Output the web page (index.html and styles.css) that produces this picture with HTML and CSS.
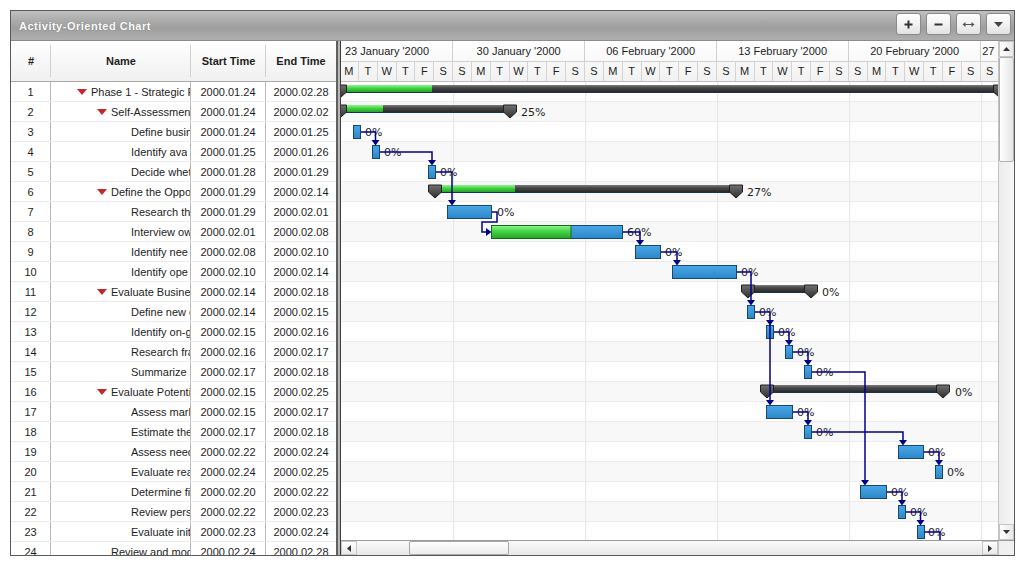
FILE: index.html
```html
<!DOCTYPE html>
<html>
<head>
<meta charset="utf-8">
<title>Activity-Oriented Chart</title>
<link rel="stylesheet" href="styles.css">
</head>
<body>
<div class="frame">
  <div class="titlebar">
    <span class="title">Activity-Oriented Chart</span>
    <div class="tools">
      <div class="tbtn"><svg width="11" height="11" viewBox="0 0 11 11"><path d="M5.5 1.5V9.5M1.5 5.5H9.5" stroke="#333" stroke-width="2"/></svg></div>
      <div class="tbtn"><svg width="11" height="11" viewBox="0 0 11 11"><path d="M1.5 5.5H9.5" stroke="#333" stroke-width="2"/></svg></div>
      <div class="tbtn"><svg width="13" height="9" viewBox="0 0 13 9"><path d="M3 4.5H10" stroke="#555" stroke-width="1"/><path d="M0.5 4.5L3.5 2V7Z M12.5 4.5L9.5 2V7Z" fill="#555"/></svg></div>
      <div class="tbtn"><svg width="9" height="5" viewBox="0 0 9 5"><path d="M0 0H9L4.5 5Z" fill="#444"/></svg></div>
    </div>
  </div>
  <div class="main">
    <div class="grid">
      <div class="ghead">
        <div class="c num">#</div>
        <div class="c name">Name</div>
        <div class="c start">Start Time</div>
        <div class="c end">End Time</div>
      </div>
      <div class="gbody">
        <div class="grow"><div class="c num">1</div><div class="c name l0"><i class="tri"></i><span class="nm">Phase 1 - Strategic P</span></div><div class="c start">2000.01.24</div><div class="c end">2000.02.28</div></div>
        <div class="grow"><div class="c num">2</div><div class="c name l1"><i class="tri"></i><span class="nm">Self-Assessment</span></div><div class="c start">2000.01.24</div><div class="c end">2000.02.02</div></div>
        <div class="grow"><div class="c num">3</div><div class="c name l2"><span class="nm">Define busin</span></div><div class="c start">2000.01.24</div><div class="c end">2000.01.25</div></div>
        <div class="grow"><div class="c num">4</div><div class="c name l2"><span class="nm">Identify ava</span></div><div class="c start">2000.01.25</div><div class="c end">2000.01.26</div></div>
        <div class="grow"><div class="c num">5</div><div class="c name l2"><span class="nm">Decide whet</span></div><div class="c start">2000.01.28</div><div class="c end">2000.01.29</div></div>
        <div class="grow"><div class="c num">6</div><div class="c name l1"><i class="tri"></i><span class="nm">Define the Oppo</span></div><div class="c start">2000.01.29</div><div class="c end">2000.02.14</div></div>
        <div class="grow"><div class="c num">7</div><div class="c name l2"><span class="nm">Research th</span></div><div class="c start">2000.01.29</div><div class="c end">2000.02.01</div></div>
        <div class="grow"><div class="c num">8</div><div class="c name l2"><span class="nm">Interview ow</span></div><div class="c start">2000.02.01</div><div class="c end">2000.02.08</div></div>
        <div class="grow"><div class="c num">9</div><div class="c name l2"><span class="nm">Identify nee</span></div><div class="c start">2000.02.08</div><div class="c end">2000.02.10</div></div>
        <div class="grow"><div class="c num">10</div><div class="c name l2"><span class="nm">Identify ope</span></div><div class="c start">2000.02.10</div><div class="c end">2000.02.14</div></div>
        <div class="grow"><div class="c num">11</div><div class="c name l1"><i class="tri"></i><span class="nm">Evaluate Busines</span></div><div class="c start">2000.02.14</div><div class="c end">2000.02.18</div></div>
        <div class="grow"><div class="c num">12</div><div class="c name l2"><span class="nm">Define new e</span></div><div class="c start">2000.02.14</div><div class="c end">2000.02.15</div></div>
        <div class="grow"><div class="c num">13</div><div class="c name l2"><span class="nm">Identify on-g</span></div><div class="c start">2000.02.15</div><div class="c end">2000.02.16</div></div>
        <div class="grow"><div class="c num">14</div><div class="c name l2"><span class="nm">Research fra</span></div><div class="c start">2000.02.16</div><div class="c end">2000.02.17</div></div>
        <div class="grow"><div class="c num">15</div><div class="c name l2"><span class="nm">Summarize b</span></div><div class="c start">2000.02.17</div><div class="c end">2000.02.18</div></div>
        <div class="grow"><div class="c num">16</div><div class="c name l1"><i class="tri"></i><span class="nm">Evaluate Potenti</span></div><div class="c start">2000.02.15</div><div class="c end">2000.02.25</div></div>
        <div class="grow"><div class="c num">17</div><div class="c name l2"><span class="nm">Assess mark</span></div><div class="c start">2000.02.15</div><div class="c end">2000.02.17</div></div>
        <div class="grow"><div class="c num">18</div><div class="c name l2"><span class="nm">Estimate the</span></div><div class="c start">2000.02.17</div><div class="c end">2000.02.18</div></div>
        <div class="grow"><div class="c num">19</div><div class="c name l2"><span class="nm">Assess need</span></div><div class="c start">2000.02.22</div><div class="c end">2000.02.24</div></div>
        <div class="grow"><div class="c num">20</div><div class="c name l2"><span class="nm">Evaluate rea</span></div><div class="c start">2000.02.24</div><div class="c end">2000.02.25</div></div>
        <div class="grow"><div class="c num">21</div><div class="c name l2"><span class="nm">Determine fi</span></div><div class="c start">2000.02.20</div><div class="c end">2000.02.22</div></div>
        <div class="grow"><div class="c num">22</div><div class="c name l2"><span class="nm">Review pers</span></div><div class="c start">2000.02.22</div><div class="c end">2000.02.23</div></div>
        <div class="grow"><div class="c num">23</div><div class="c name l2"><span class="nm">Evaluate init</span></div><div class="c start">2000.02.23</div><div class="c end">2000.02.24</div></div>
        <div class="grow"><div class="c num">24</div><div class="c name l1 leaf"><span class="nm">Review and mod</span></div><div class="c start">2000.02.24</div><div class="c end">2000.02.28</div></div>
      </div>
    </div>
    <div class="splitter"></div>
    <div class="chart">
      <div class="chart-top">
        <div class="chart-area">
          <div class="thead">
            <div class="weeks">
              <div class="wk first">23 January '2000</div>
              <div class="wk full">30 January '2000</div>
              <div class="wk full">06 February '2000</div>
              <div class="wk full">13 February '2000</div>
              <div class="wk full">20 February '2000</div>
              <div class="wk last">27 F</div>
            </div>
            <div class="days">
              <span class="day">M</span><span class="day">T</span><span class="day">W</span><span class="day">T</span><span class="day">F</span><span class="day">S</span><span class="day">S</span>
              <span class="day">M</span><span class="day">T</span><span class="day">W</span><span class="day">T</span><span class="day">F</span><span class="day">S</span><span class="day">S</span>
              <span class="day">M</span><span class="day">T</span><span class="day">W</span><span class="day">T</span><span class="day">F</span><span class="day">S</span><span class="day">S</span>
              <span class="day">M</span><span class="day">T</span><span class="day">W</span><span class="day">T</span><span class="day">F</span><span class="day">S</span><span class="day">S</span>
              <span class="day">M</span><span class="day">T</span><span class="day">W</span><span class="day">T</span><span class="day">F</span><span class="day">S</span><span class="day">S</span>
            </div>
          </div>
          <div class="tbody">
            <div class="trow"></div><div class="trow"></div><div class="trow"></div><div class="trow"></div>
            <div class="trow"></div><div class="trow"></div><div class="trow"></div><div class="trow"></div>
            <div class="trow"></div><div class="trow"></div><div class="trow"></div><div class="trow"></div>
            <div class="trow"></div><div class="trow"></div><div class="trow"></div><div class="trow"></div>
            <div class="trow"></div><div class="trow"></div><div class="trow"></div><div class="trow"></div>
            <div class="trow"></div><div class="trow"></div><div class="trow"></div><div class="trow"></div>
            <svg class="overlay" width="657" height="458" viewBox="341 82 657 458">
              <defs>
                <linearGradient id="gSum" x1="0" y1="0" x2="0" y2="1"><stop offset="0" stop-color="#7c7c7c"/><stop offset=".4" stop-color="#484848"/><stop offset="1" stop-color="#2a2a2a"/></linearGradient>
                <linearGradient id="gCap" x1="0" y1="0" x2="0" y2="1"><stop offset="0" stop-color="#707070"/><stop offset="1" stop-color="#2e2e2e"/></linearGradient>
                <linearGradient id="gGreen" x1="0" y1="0" x2="0" y2="1"><stop offset="0" stop-color="#8ef58e"/><stop offset=".45" stop-color="#45d445"/><stop offset="1" stop-color="#24a424"/></linearGradient>
                <linearGradient id="gBlue" x1="0" y1="0" x2="0" y2="1"><stop offset="0" stop-color="#4aa7e5"/><stop offset="1" stop-color="#2c86c8"/></linearGradient>
              </defs>
              <!-- summaries -->
              <rect class="sum" x="340" y="85" width="660" height="7"/><line class="sumline" x1="340" y1="92.5" x2="1000" y2="92.5"/>
              <rect class="prog" x="340" y="85" width="92" height="7"/>
              <polygon class="cap" points="333.5,85 346.5,85 346.5,92 340,98 333.5,92"/>
              <polygon class="cap" points="993.5,85 1006.5,85 1006.5,92 1000,98 993.5,92"/>

              <rect class="sum" x="340" y="105" width="170" height="7"/><line class="sumline" x1="340" y1="112.5" x2="510" y2="112.5"/>
              <rect class="prog" x="340" y="105" width="43" height="7"/>
              <polygon class="cap" points="333.5,105 346.5,105 346.5,112 340,118 333.5,112"/>
              <polygon class="cap" points="503.5,105 516.5,105 516.5,112 510,118 503.5,112"/>

              <rect class="sum" x="435" y="185" width="301" height="7"/><line class="sumline" x1="435" y1="192.5" x2="736" y2="192.5"/>
              <rect class="prog" x="435" y="185" width="80" height="7"/>
              <polygon class="cap" points="428.5,185 441.5,185 441.5,192 435,198 428.5,192"/>
              <polygon class="cap" points="729.5,185 742.5,185 742.5,192 736,198 729.5,192"/>

              <rect class="sum" x="748" y="285" width="63" height="7"/><line class="sumline" x1="748" y1="292.5" x2="811" y2="292.5"/>
              <polygon class="cap" points="741.5,285 754.5,285 754.5,292 748,298 741.5,292"/>
              <polygon class="cap" points="804.5,285 817.5,285 817.5,292 811,298 804.5,292"/>

              <rect class="sum" x="767" y="385" width="176" height="7"/><line class="sumline" x1="767" y1="392.5" x2="943" y2="392.5"/>
              <polygon class="cap" points="760.5,385 773.5,385 773.5,392 767,398 760.5,392"/>
              <polygon class="cap" points="936.5,385 949.5,385 949.5,392 943,398 936.5,392"/>

              <!-- tasks -->
              <rect class="task" x="353.5" y="125.5" width="7" height="13"/>
              <rect class="task" x="372.5" y="145.5" width="7" height="13"/>
              <rect class="task" x="428.5" y="165.5" width="7" height="13"/>
              <rect class="task" x="447.5" y="205.5" width="44" height="13"/>
              <rect class="task" x="491.5" y="225.5" width="131" height="13"/>
              <rect class="taskprog" x="491.5" y="225.5" width="79.5" height="13"/>
              <rect class="task" x="635.5" y="245.5" width="25" height="13"/>
              <rect class="task" x="672.5" y="265.5" width="64" height="13"/>
              <rect class="task" x="747.5" y="305.5" width="7" height="13"/>
              <rect class="task" x="766.5" y="325.5" width="7" height="13"/>
              <rect class="task" x="785.5" y="345.5" width="7" height="13"/>
              <rect class="task" x="804.5" y="365.5" width="7" height="13"/>
              <rect class="task" x="766.5" y="405.5" width="26" height="13"/>
              <rect class="task" x="804.5" y="425.5" width="7" height="13"/>
              <rect class="task" x="898.5" y="445.5" width="25" height="13"/>
              <rect class="task" x="935.5" y="465.5" width="7" height="13"/>
              <rect class="task" x="860.5" y="485.5" width="26" height="13"/>
              <rect class="task" x="898.5" y="505.5" width="7" height="13"/>
              <rect class="task" x="917.5" y="525.5" width="7" height="13"/>

              <!-- labels -->
              <text class="pct" x="521" y="116">25%</text>
              <text class="pct" x="365" y="136">0%</text>
              <text class="pct" x="384" y="156">0%</text>
              <text class="pct" x="440" y="176">0%</text>
              <text class="pct" x="747" y="196">27%</text>
              <text class="pct" x="497" y="216">0%</text>
              <text class="pct" x="627" y="236">60%</text>
              <text class="pct" x="665" y="256">0%</text>
              <text class="pct" x="741" y="276">0%</text>
              <text class="pct" x="822" y="296">0%</text>
              <text class="pct" x="759" y="316">0%</text>
              <text class="pct" x="778" y="336">0%</text>
              <text class="pct" x="797" y="356">0%</text>
              <text class="pct" x="816" y="376">0%</text>
              <text class="pct" x="955" y="396">0%</text>
              <text class="pct" x="797" y="416">0%</text>
              <text class="pct" x="816" y="436">0%</text>
              <text class="pct" x="928" y="456">0%</text>
              <text class="pct" x="947" y="476">0%</text>
              <text class="pct" x="891" y="496">0%</text>
              <text class="pct" x="910" y="516">0%</text>
              <text class="pct" x="928" y="536">0%</text>

              <!-- connectors -->
              <path class="lnk" d="M361 132H375.5V140"/><polygon class="arr" points="371.5,140 379.5,140 375.5,145.5"/>
              <path class="lnk" d="M380 152H432V160"/><polygon class="arr" points="428,160 436,160 432,165.5"/>
              <path class="lnk" d="M436 172H452V200"/><polygon class="arr" points="448,200 456,200 452,205.5"/>
              <path class="lnk" d="M492 212H497V222H482V232H486"/><polygon class="arr" points="486,228 486,236 491.5,232"/>
              <path class="lnk" d="M623 232H640V240"/><polygon class="arr" points="636,240 644,240 640,245.5"/>
              <path class="lnk" d="M661 252H677V260"/><polygon class="arr" points="673,260 681,260 677,265.5"/>
              <path class="lnk" d="M737 272H751V300"/><polygon class="arr" points="747,300 755,300 751,305.5"/>
              <path class="lnk" d="M755 312H770V320"/><polygon class="arr" points="766,320 774,320 770,325.5"/>
              <path class="lnk" d="M770 320V400"/><polygon class="arr" points="766,400 774,400 770,405.5"/>
              <path class="lnk" d="M774 332H789V340"/><polygon class="arr" points="785,340 793,340 789,345.5"/>
              <path class="lnk" d="M793 352H808V360"/><polygon class="arr" points="804,360 812,360 808,365.5"/>
              <path class="lnk" d="M812 372H865V480"/><polygon class="arr" points="861,480 869,480 865,485.5"/>
              <path class="lnk" d="M793 412H808V420"/><polygon class="arr" points="804,420 812,420 808,425.5"/>
              <path class="lnk" d="M812 432H903V440"/><polygon class="arr" points="899,440 907,440 903,445.5"/>
              <path class="lnk" d="M924 452H939V460"/><polygon class="arr" points="935,460 943,460 939,465.5"/>
              <path class="lnk" d="M887 492H902V500"/><polygon class="arr" points="898,500 906,500 902,505.5"/>
              <path class="lnk" d="M906 512H920.5V520"/><polygon class="arr" points="916.5,520 924.5,520 920.5,525.5"/>
              <path class="lnk" d="M924 532H940V541"/>
            </svg>
          </div>
        </div>
        <div class="vscroll">
          <div class="sbtn"><svg width="7" height="4" viewBox="0 0 7 4"><path d="M0 4H7L3.5 0Z" fill="#333"/></svg></div>
          <div class="vthumb"></div>
          <div class="vtrack"></div>
          <div class="sbtn"><svg width="7" height="4" viewBox="0 0 7 4"><path d="M0 0H7L3.5 4Z" fill="#333"/></svg></div>
        </div>
      </div>
      <div class="hrow">
        <div class="hscroll">
          <div class="hbtn"><svg width="4" height="7" viewBox="0 0 4 7"><path d="M4 0V7L0 3.5Z" fill="#333"/></svg></div>
          <div class="hgap"></div>
          <div class="hthumb"></div>
          <div class="htrack"></div>
          <div class="hbtn"><svg width="4" height="7" viewBox="0 0 4 7"><path d="M0 0V7L4 3.5Z" fill="#333"/></svg></div>
        </div>
        <div class="corner"></div>
      </div>
    </div>
  </div>
</div>
</body>
</html>
```

FILE: styles.css
```css
* { box-sizing: border-box; }

body {
  margin: 0;
  background: #fff;
  font-family: "Liberation Sans", Arial, sans-serif;
  font-size: 11px;
  color: #1e1e1e;
}

.frame {
  margin: 10px;
  width: 1005px;
  height: 546px;
  border: 1px solid #5a5a5a;
  display: flex;
  flex-direction: column;
  overflow: hidden;
}

/* title bar */
.titlebar {
  height: 30px;
  flex: none;
  display: flex;
  align-items: center;
  justify-content: space-between;
  padding: 0 3px 0 8px;
  background: linear-gradient(#c0c0c0, #a7a7a7 40%, #9e9e9e 60%, #b0b0b0);
  border-bottom: 1px solid #8c8c8c;
}
.title {
  color: #fbfbfb;
  font-weight: bold;
  font-size: 11px;
  letter-spacing: 0.5px;
  text-shadow: 0 0 1px rgba(0,0,0,0.3);
}
.tools {
  display: flex;
  gap: 5px;
  align-self: flex-start;
  margin-top: 2px;
}
.tbtn {
  width: 25px;
  height: 22px;
  display: flex;
  align-items: center;
  justify-content: center;
  border: 1px solid #8a8a8a;
  border-radius: 3px;
  background: linear-gradient(#ffffff, #f2f2f2 50%, #e2e2e2);
}

/* main area */
.main {
  flex: 1;
  display: flex;
  min-height: 0;
}

/* data grid */
.grid {
  width: 325px;
  flex: none;
  display: flex;
  flex-direction: column;
  overflow: hidden;
}
.ghead {
  height: 41px;
  flex: none;
  display: flex;
  border-bottom: 1px solid #a9a9a9;
  background: linear-gradient(#ffffff, #f0f0f0);
  font-weight: bold;
}
.c {
  flex: none;
  display: flex;
  align-items: center;
  justify-content: center;
  white-space: nowrap;
  overflow: hidden;
}
.num { width: 40px; }
.name { width: 140px; }
.start { width: 75px; }
.end { width: 70px; }

.ghead .c:not(.end) {
  background: linear-gradient(#d0d0d0, #d0d0d0) right center / 1px 32px no-repeat;
}

.gbody {
  flex: 1;
  overflow: hidden;
}
.grow {
  height: 20px;
  display: flex;
  border-bottom: 1px solid #ebebeb;
}
.grow .c {
  padding-top: 1px;
}
.grow .c:not(.end) {
  border-right: 1px solid #b9b9b9;
}
.grow .name {
  justify-content: flex-start;
}
.nm {
  min-width: 0;
  overflow: hidden;
  white-space: nowrap;
}
.l0 { padding-left: 26px; }
.l1 { padding-left: 46px; }
.l1.leaf { padding-left: 60px; }
.l2 { padding-left: 80px; }
.tri {
  flex: none;
  width: 0;
  height: 0;
  border-left: 5px solid transparent;
  border-right: 5px solid transparent;
  border-top: 6px solid #c3262b;
  margin-right: 4px;
}

.splitter {
  width: 5px;
  flex: none;
  background: #b8b8b8;
  border-left: 2px solid #5f5f5f;
  border-right: 1px solid #3c3c3c;
}

/* chart */
.chart {
  width: 673px;
  flex: none;
  display: flex;
  flex-direction: column;
}
.chart-top {
  flex: 1;
  display: flex;
  min-height: 0;
}
.chart-area {
  width: 657px;
  flex: none;
  display: flex;
  flex-direction: column;
  overflow: hidden;
}
.thead {
  height: 41px;
  flex: none;
  background: linear-gradient(#ffffff, #f1f1f1);
}
.weeks {
  height: 21px;
  display: flex;
  border-bottom: 1px solid #d0d0d0;
}
.wk {
  flex: none;
  line-height: 20px;
  text-align: center;
  white-space: nowrap;
  overflow: hidden;
  border-right: 1px solid #d0d0d0;
}
.wk.first { width: 112.14px; text-align: left; padding-left: 4px; }
.wk.full { width: 132px; }
.wk.last { flex: 1; text-align: left; padding-left: 1px; border-right: 0; }

.days {
  height: 20px;
  margin-left: -1px;
  display: grid;
  grid-template-columns: repeat(35, 18.857px);
  border-bottom: 1px solid #bcbcbc;
}
.day {
  text-align: center;
  line-height: 19px;
  border-right: 1px solid #d3d3d3;
}

.tbody {
  flex: 1;
  position: relative;
  overflow: hidden;
}
.trow {
  height: 20px;
  border-bottom: 1px solid #ececec;
  background-color: #fff;
  background-image: linear-gradient(to right, #e4e4e4 1px, transparent 1px);
  background-size: 132px 100%;
  background-position: 112.14px 0;
}
.trow:nth-child(even) { background-color: #f8f8f8; }

.overlay {
  position: absolute;
  left: 0;
  top: 0;
}
.sum { fill: url(#gSum); }
.sumline { stroke: #123458; stroke-width: 1; }
.prog { fill: url(#gGreen); }
.cap { fill: url(#gCap); stroke: #202020; stroke-width: 1; }
.task { fill: url(#gBlue); stroke: #174870; stroke-width: 1; }
.taskprog { fill: url(#gGreen); stroke: #1b6a1b; stroke-width: 1; }
.pct {
  font-family: "DejaVu Sans", Verdana, sans-serif;
  font-size: 11px;
  fill: #1e1e1e;
}
.lnk { fill: none; stroke: #000088; stroke-width: 1.5; }
.arr { fill: #000088; }

/* scrollbars */
.vscroll {
  width: 16px;
  flex: none;
  display: flex;
  flex-direction: column;
  background: linear-gradient(to right, #ebebeb, #f7f7f7);
  border-left: 1px solid #c4c4c4;
}
.sbtn {
  height: 16px;
  flex: none;
  display: flex;
  align-items: center;
  justify-content: center;
  border: 1px solid #c6c6c6;
  background: linear-gradient(to right, #ffffff, #e8e8e8);
}
.vthumb {
  height: 105px;
  flex: none;
  border: 1px solid #b0b0b0;
  border-radius: 2px;
  background: linear-gradient(to right, #ffffff, #e6e6e6);
}
.vtrack { flex: 1; }

.hrow {
  height: 15px;
  flex: none;
  display: flex;
  border-top: 1px solid #9a9a9a;
}
.hscroll {
  width: 657px;
  flex: none;
  display: flex;
  background: linear-gradient(#fafafa, #e7e7e7);
}
.hbtn {
  width: 16px;
  flex: none;
  display: flex;
  align-items: center;
  justify-content: center;
  border: 1px solid #c6c6c6;
  background: linear-gradient(#ffffff, #e8e8e8);
}
.hgap { width: 52px; flex: none; }
.hthumb {
  width: 100px;
  flex: none;
  border: 1px solid #a8a8a8;
  border-radius: 2px;
  background: linear-gradient(#ffffff, #ececec);
}
.htrack { flex: 1; }
.corner {
  flex: 1;
  background: #f0f0f0;
  border-left: 1px solid #c4c4c4;
}
```
